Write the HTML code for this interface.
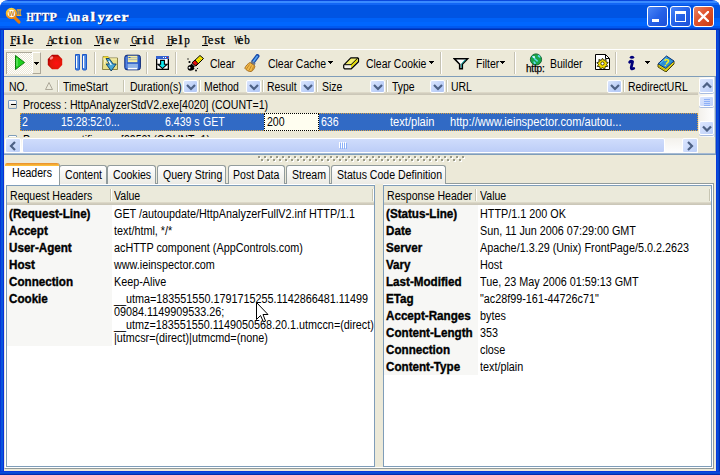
<!DOCTYPE html>
<html><head><meta charset="utf-8">
<style>
*{margin:0;padding:0;box-sizing:border-box}
html,body{width:720px;height:475px;overflow:hidden;background:#fff}
body{position:relative;font-family:"Liberation Sans",sans-serif;font-size:11px;color:#000;line-height:13px}
.a{position:absolute;white-space:nowrap}
#win{position:absolute;left:0;top:0;width:720px;height:475px;border-radius:8px 8px 0 0;overflow:hidden;
 background:linear-gradient(to right,#0019cf 0,#0855dd 1px,#0855dd 3px,#0831d9 3px,#0831d9 4px,transparent 4px,transparent 716px,#0831d9 716px,#0855dd 718px,#001ea0 720px)}
#title{left:0;top:0;width:720px;height:30px;
 background:linear-gradient(to bottom,#0a48dc 0,#0a48dc 1px,#3a8bff 1px,#3a8bff 3px,#1266f5 3px,#1266f5 5px,#0054e3 5px,#0054e3 18px,#0062f8 18px,#0062f8 22px,#0066ff 22px,#0066ff 26px,#0058ef 26px,#0058ef 28px,#0040d0 28px,#0040d0 29px,#0030b0 29px)}
#bottomframe{left:0;top:471px;width:720px;height:4px;background:linear-gradient(to bottom,#0831d9,#0855dd 2px,#001ea0)}
#client{left:4px;top:30px;width:712px;height:441px;background:#ece9d8}
.ttl{-webkit-text-stroke:.35px #fff;left:25px;top:8.5px;font-family:"Liberation Serif",serif;font-weight:bold;font-size:13.5px;line-height:16px;color:#fff;text-shadow:1px 1px 0 #0a1f7a}
.wb{width:21px;height:21px;top:6px;border:1px solid #fff;border-radius:3px}
.menu{white-space:pre;left:10px;top:34px;font-family:"Liberation Serif",serif;font-size:12px;line-height:13px;-webkit-text-stroke:.25px #000}
.menu u{text-decoration:none}
.tb{top:58px;font-size:12px;transform:scaleX(.87);transform-origin:0 0}
.sep{width:2px;height:22px;top:52px;border-left:1px solid #c5c2b2;border-right:1px solid #fff}
.arr{width:0;height:0;border-left:3px solid transparent;border-right:3px solid transparent;border-top:3px solid #000}
.hsep{top:80px;width:2px;height:12px;border-left:1px solid #c7c5b2;border-right:1px solid #fff}
.dd{top:80px;width:15px;height:13px;background:linear-gradient(135deg,#dbe6fd,#bdd0f8 60%,#b2c8f6);border-radius:2px;border:1px solid #fff}
.dd svg{position:absolute;left:2px;top:3px}
.ht{top:81px;font-size:12px;transform:scaleX(.87);transform-origin:0 0}
.row{font-size:12px;transform:scaleX(.88);transform-origin:0 0}
.wt{color:#fff}
.tab{top:165px;height:19px;border:1px solid #919b9c;border-bottom:none;border-radius:3px 3px 0 0;background:linear-gradient(#fff,#f3f3ef 60%,#ecebe5)}
.tabt{top:168px;font-size:12px;transform:scaleX(.88);transform-origin:0 0}
.sb{background:linear-gradient(to bottom,#fdfdfd,#f0f0ea)}
.btn{border:1px solid #fff;border-radius:2px;background:linear-gradient(135deg,#dce6fe,#bccff8)}
.ph{top:186px;height:19px;background:linear-gradient(to bottom,#ebeadb 0,#ebeadb 16px,#e2decd 16px,#d6d2c2 17px,#cbc7b8 18px)}
.pht{top:190px;font-size:12px;transform:scaleX(.88);transform-origin:0 0}
.b{-webkit-text-stroke:0.35px #000;font-weight:bold;font-size:12px;transform:scaleX(.97);transform-origin:0 0}
.v{font-size:12px;transform:scaleX(.9);transform-origin:0 0}
</style></head><body>
<div id="win">
 <div id="title" class="a"></div>
 <div id="client" class="a"></div>
 <div id="bottomframe" class="a"></div>
</div>
<!-- title bar -->
<svg class="a" style="left:5px;top:7px" width="18" height="18"><defs><linearGradient id="ig" x1="0" y1="0" x2=".3" y2="1"><stop offset="0" stop-color="#ffd838"/><stop offset="1" stop-color="#f08a10"/></linearGradient></defs><path d="M9.8 10.6L14 15" stroke="#e87a08" stroke-width="3.2" stroke-linecap="round"/><circle cx="6.4" cy="6.4" r="4.7" fill="#fffaf0" stroke="url(#ig)" stroke-width="1.9"/><text x="6.5" y="9" font-family="Liberation Sans" font-size="6.5" font-weight="bold" fill="#d08418" text-anchor="middle">W</text><path d="M11.8 2.8h4.6M11.8 8.3h4.6M13.1 2.8v5.5M15.1 2.8v5.5" stroke="#f8b020" stroke-width="1.2"/></svg>
<div class="a ttl"><span style="display:inline-block;width:8px;text-align:center"><span style="display:inline-block;transform:scaleX(0.70)">H</span></span><span style="display:inline-block;width:8px;text-align:center"><span style="display:inline-block;transform:scaleX(0.82)">T</span></span><span style="display:inline-block;width:8px;text-align:center"><span style="display:inline-block;transform:scaleX(0.82)">T</span></span><span style="display:inline-block;width:8px;text-align:center"><span style="display:inline-block;transform:scaleX(0.90)">P</span></span><span style="display:inline-block;width:8px"></span><span style="display:inline-block;width:8px;text-align:center"><span style="display:inline-block;transform:scaleX(0.76)">A</span></span><span style="display:inline-block;width:8px;text-align:center"><span style="display:inline-block;transform:scaleX(0.93)">n</span></span><span style="display:inline-block;width:8px;text-align:center"><span style="display:inline-block;transform:scaleX(1.04)">a</span></span><span style="display:inline-block;width:8px;text-align:center"><span style="display:inline-block;transform:scaleX(1.25)">l</span></span><span style="display:inline-block;width:8px;text-align:center"><span style="display:inline-block;transform:scaleX(1.04)">y</span></span><span style="display:inline-block;width:8px;text-align:center"><span style="display:inline-block;transform:scaleX(1.17)">z</span></span><span style="display:inline-block;width:8px;text-align:center"><span style="display:inline-block;transform:scaleX(1.17)">e</span></span><span style="display:inline-block;width:8px;text-align:center"><span style="display:inline-block;transform:scaleX(1.17)">r</span></span></div>
<div class="a wb" style="left:647px;background:linear-gradient(135deg,#4b86f7,#2662e8 50%,#1c4fd8)"><div class="a" style="left:4px;top:12px;width:7px;height:3px;background:#fff"></div></div>
<div class="a wb" style="left:670px;background:linear-gradient(135deg,#4b86f7,#2662e8 50%,#1c4fd8)"><div class="a" style="left:4px;top:4px;width:11px;height:11px;border:1px solid #fff;border-top-width:3px"></div></div>
<div class="a wb" style="left:693px;background:linear-gradient(135deg,#e98565,#e0532d 45%,#c83a12)">
 <svg class="a" style="left:4px;top:4px" width="11" height="11"><path d="M1 1L10 10M10 1L1 10" stroke="#fff" stroke-width="2.3" stroke-linecap="square"/></svg></div>

<!-- menu -->
<div class="a" style="left:4px;top:49px;width:712px;height:1px;background:#fff"></div>
<div class="a menu"><span style="display:inline-block;width:6px;text-align:center"><span style="display:inline-block;transform:scaleX(0.93)">F</span></span><span style="display:inline-block;width:6px;text-align:center"><span style="display:inline-block;transform:scaleX(1.40)">i</span></span><span style="display:inline-block;width:6px;text-align:center"><span style="display:inline-block;transform:scaleX(1.40)">l</span></span><span style="display:inline-block;width:6px;text-align:center"><span style="display:inline-block;transform:scaleX(1.05)">e</span></span><span style="display:inline-block;width:6px"></span><span style="display:inline-block;width:6px"></span><span style="display:inline-block;width:6px;text-align:center"><span style="display:inline-block;transform:scaleX(0.71)">A</span></span><span style="display:inline-block;width:6px;text-align:center"><span style="display:inline-block;transform:scaleX(1.05)">c</span></span><span style="display:inline-block;width:6px;text-align:center"><span style="display:inline-block;transform:scaleX(1.40)">t</span></span><span style="display:inline-block;width:6px;text-align:center"><span style="display:inline-block;transform:scaleX(1.40)">i</span></span><span style="display:inline-block;width:6px;text-align:center"><span style="display:inline-block;transform:scaleX(0.93)">o</span></span><span style="display:inline-block;width:6px;text-align:center"><span style="display:inline-block;transform:scaleX(0.93)">n</span></span><span style="display:inline-block;width:6px"></span><span style="display:inline-block;width:6px"></span><span style="display:inline-block;width:6px;text-align:center"><span style="display:inline-block;transform:scaleX(0.71)">V</span></span><span style="display:inline-block;width:6px;text-align:center"><span style="display:inline-block;transform:scaleX(1.40)">i</span></span><span style="display:inline-block;width:6px;text-align:center"><span style="display:inline-block;transform:scaleX(1.05)">e</span></span><span style="display:inline-block;width:6px;text-align:center"><span style="display:inline-block;transform:scaleX(0.65)">w</span></span><span style="display:inline-block;width:6px"></span><span style="display:inline-block;width:6px"></span><span style="display:inline-block;width:6px;text-align:center"><span style="display:inline-block;transform:scaleX(0.71)">G</span></span><span style="display:inline-block;width:6px;text-align:center"><span style="display:inline-block;transform:scaleX(1.40)">r</span></span><span style="display:inline-block;width:6px;text-align:center"><span style="display:inline-block;transform:scaleX(1.40)">i</span></span><span style="display:inline-block;width:6px;text-align:center"><span style="display:inline-block;transform:scaleX(0.93)">d</span></span><span style="display:inline-block;width:6px"></span><span style="display:inline-block;width:6px"></span><span style="display:inline-block;width:6px;text-align:center"><span style="display:inline-block;transform:scaleX(0.71)">H</span></span><span style="display:inline-block;width:6px;text-align:center"><span style="display:inline-block;transform:scaleX(1.05)">e</span></span><span style="display:inline-block;width:6px;text-align:center"><span style="display:inline-block;transform:scaleX(1.40)">l</span></span><span style="display:inline-block;width:6px;text-align:center"><span style="display:inline-block;transform:scaleX(0.93)">p</span></span><span style="display:inline-block;width:6px"></span><span style="display:inline-block;width:6px"></span><span style="display:inline-block;width:6px;text-align:center"><span style="display:inline-block;transform:scaleX(0.85)">T</span></span><span style="display:inline-block;width:6px;text-align:center"><span style="display:inline-block;transform:scaleX(1.05)">e</span></span><span style="display:inline-block;width:6px;text-align:center"><span style="display:inline-block;transform:scaleX(1.20)">s</span></span><span style="display:inline-block;width:6px;text-align:center"><span style="display:inline-block;transform:scaleX(1.40)">t</span></span><span style="display:inline-block;width:6px"></span><span style="display:inline-block;width:6px;text-align:center"><span style="display:inline-block;transform:scaleX(0.60)">W</span></span><span style="display:inline-block;width:6px;text-align:center"><span style="display:inline-block;transform:scaleX(1.05)">e</span></span><span style="display:inline-block;width:6px;text-align:center"><span style="display:inline-block;transform:scaleX(0.93)">b</span></span></div>

<div class="a" style="left:10px;top:45px;width:6px;height:1px;background:#000"></div><div class="a" style="left:46px;top:45px;width:6px;height:1px;background:#000"></div><div class="a" style="left:94px;top:45px;width:6px;height:1px;background:#000"></div><div class="a" style="left:130px;top:45px;width:6px;height:1px;background:#000"></div><div class="a" style="left:166px;top:45px;width:6px;height:1px;background:#000"></div><div class="a" style="left:202px;top:45px;width:6px;height:1px;background:#000"></div>
<!-- toolbar -->
<div class="a" style="left:4px;top:76px;width:712px;height:1px;background:#7f9db9"></div>
<div class="a" style="left:6px;top:52px;width:26px;height:22px;border-top:1px solid #aca899;border-left:1px solid #aca899;background-color:#fff;background-image:linear-gradient(45deg,#ece9d8 25%,transparent 25%,transparent 75%,#ece9d8 75%),linear-gradient(45deg,#ece9d8 25%,transparent 25%,transparent 75%,#ece9d8 75%);background-size:2px 2px;background-position:0 0,1px 1px"></div>
<div class="a" style="left:32px;top:52px;width:9px;height:22px;border-right:1px solid #aca899;border-bottom:1px solid #aca899;border-top:1px solid #fff;border-left:1px solid #fff"></div>
<svg class="a" style="left:34px;top:62px" width="5" height="3" shape-rendering="crispEdges"><path d="M0 0h5v1h-1v1h-1v1h-1v-1h-1v-1h-1z" fill="#000"/></svg>
<svg class="a" style="left:14px;top:54px" width="12" height="17"><path d="M1.5 1.5 L10.5 8.5 L1.5 15.5Z" fill="#1fd01f" stroke="#0a7a0a" stroke-width="1"/><path d="M3 4v8" stroke="#7ef07e" stroke-width="1"/></svg>

<svg class="a" style="left:47px;top:54px" width="16" height="16"><defs><radialGradient id="rg" cx=".6" cy=".6" r=".6"><stop offset="0" stop-color="#ff1010"/><stop offset=".7" stop-color="#e01808"/><stop offset="1" stop-color="#b00000"/></radialGradient></defs><path d="M5 .8h6l4.2 4.2v6L11 15.2H5L.8 11V5z" fill="url(#rg)"/><ellipse cx="4.5" cy="4" rx="2" ry="1.3" fill="#ff9090" transform="rotate(-40 4.5 4)"/></svg>
<svg class="a" style="left:74px;top:53px" width="15" height="18"><path d="M1.5 1.5h4v14.5c0 .6-.4 1-1 1h-2c-.6 0-1-.4-1-1z" fill="#4a86e0" stroke="#1c58c8"/><path d="M2.6 3v12" stroke="#fff" stroke-width="1.2"/><path d="M8.5 1.5h4v14.5c0 .6-.4 1-1 1h-2c-.6 0-1-.4-1-1z" fill="#4a86e0" stroke="#1c58c8"/><path d="M9.6 3v12" stroke="#fff" stroke-width="1.2"/></svg>
<div class="a sep" style="left:94px"></div>
<svg class="a" style="left:101px;top:54px" width="18" height="18"><path d="M2 2.5h5l1 1.5h8.5v11.5H1.5z" fill="#e8e088" stroke="#807838" stroke-width=".9"/><path d="M2.5 2.5h4.5l1 1.5H2.5z" fill="#f8e030"/><path d="M2 5h14" stroke="#f8f0b0" stroke-width="1.2"/><path d="M3 7h2M3 9h1" stroke="#fff" stroke-width="1"/><path d="M5 4.5h3.2l4 5.5h3l-5 7-5-7h3.2z" fill="#48a8d8" stroke="#0a3a60" stroke-width=".9" stroke-linejoin="round"/><path d="M7.8 7l2.5 4" stroke="#fff" stroke-width="1.3"/></svg>
<svg class="a" style="left:124px;top:54px" width="18" height="17"><rect x=".8" y="1.2" width="15.6" height="14.6" rx="2.2" fill="#2a5cc8" stroke="#0e2a78" stroke-width="1"/><rect x="3.8" y="1.8" width="9.6" height="6.4" fill="#f8f0a0"/><path d="M4.5 3.7h8.4M4.5 5.7h8.4" stroke="#98a8b8" stroke-width=".8"/><path d="M4.5 3.5h2" stroke="#3060c0" stroke-width="1"/><rect x="3.5" y="9.8" width="10.4" height="5.5" fill="#90b4e8"/><path d="M4 14.6h9" stroke="#fff" stroke-width="1.4"/><path d="M2.2 3v11" stroke="#6a98f0" stroke-width=".9"/></svg>
<div class="a sep" style="left:146px"></div>
<svg class="a" style="left:156px;top:56px" width="13" height="14"><rect x="0" y="0" width="13" height="14" fill="#000"/><rect x="1.3" y="3" width="10.4" height="9.7" fill="#fff"/><rect x="0" y="0" width="13" height="3" fill="#3462d0"/><rect x="7" y="1" width="1" height="1" fill="#fff"/><rect x="9" y="1" width="1" height="1" fill="#fff"/><rect x="11" y="1" width="1" height="1" fill="#f01010"/><path d="M4.6 4.4h3.8v3.8h2.8L6.5 12.6 1.8 8.2h2.8z" fill="#10e8f0" stroke="#000" stroke-width="1.1"/></svg>
<div class="a sep" style="left:175px"></div>
<svg class="a" style="left:186px;top:54px" width="19" height="18"><path d="M14 1.5L17.5 4.5 10 12 6.5 8.5z" fill="#f8e800" stroke="#000" stroke-width="1"/><path d="M15 3l1.5 1.5M13.5 4.5l1.5 1.5M12 6l1.5 1.5" stroke="#b0a000" stroke-width=".7"/><path d="M9 6L12 9.5 9.5 12 6 8.8z" fill="#e81010" stroke="#000" stroke-width="1"/><path d="M5.5 9.5L8.8 12.5 7 14.5 4 11.5z" fill="#000"/><path d="M6 11.5c-2-1-4.5 0-4.5 2.5 0 2 2 3 4 2.5 1.5-.3 2.5-1 3-2" fill="#000"/><circle cx="3.5" cy="8" r="1.1" fill="#000"/><circle cx="2" cy="5" r=".7" fill="#000"/><circle cx="10" cy="16.5" r=".9" fill="#000"/><circle cx="11.5" cy="14.5" r=".6" fill="#000"/><circle cx="3.5" cy="13.8" r="1" fill="#fff"/></svg>
<div class="a tb" style="left:210px">Clear</div>
<svg class="a" style="left:244px;top:54px" width="16" height="18"><path d="M13.5 2L9 8" stroke="#1848a8" stroke-width="4" stroke-linecap="round"/><path d="M13.3 2.3L9.5 7.5" stroke="#5aa8f0" stroke-width="1.6" stroke-linecap="round"/><path d="M7 7.5l4 3" stroke="#6a7890" stroke-width="2.2"/><path d="M6 8.5l5 3.5c-.5 2.5-2 5-4 5.5C5 18 2 16 .8 14.2 1.5 12 4 9.5 6 8.5z" fill="#f0b848" stroke="#a06818" stroke-width=".9"/><path d="M5.5 10.5L2.5 15M7.5 11.5L5 16.5M9.5 12.5L8 16.5" stroke="#b87a20" stroke-width=".8"/></svg>
<div class="a tb" style="left:268px">Clear Cache</div>
<svg class="a" style="left:328px;top:61px" width="5" height="3" shape-rendering="crispEdges"><path d="M0 0h5v1h-1v1h-1v1h-1v-1h-1v-1h-1z" fill="#000"/></svg>
<svg class="a" style="left:343px;top:57px" width="17" height="13"><path d="M8 1h6.5L8 7.5H1.5z" fill="#f4f070"/><path d="M1.5 7.5H8V11H1.5z" fill="#f4f2ea"/><path d="M8 7.5L14.5 1v3.5L8 11z" fill="#e8e000"/><path d="M7.8.8h7l.7.7v3.2L8.3 11.8H1.6l-.9-.9V8.2z" fill="none" stroke="#000" stroke-width="1.2" stroke-linejoin="round"/><path d="M1.5 7.7H8L14.8 1" fill="none" stroke="#000" stroke-width="1"/></svg>
<div class="a tb" style="left:366px">Clear Cookie</div>
<svg class="a" style="left:429px;top:61px" width="5" height="3" shape-rendering="crispEdges"><path d="M0 0h5v1h-1v1h-1v1h-1v-1h-1v-1h-1z" fill="#000"/></svg>
<div class="a sep" style="left:440px"></div>
<svg class="a" style="left:453px;top:57px" width="17" height="13"><path d="M1.5 1.8H14.5L9.3 7.2V11.8H6.7V7.2z" fill="#fff" stroke="#000" stroke-width="1.6" stroke-linejoin="miter"/><path d="M11.6 2.8h1.6L9 7v3.5l-.8.6V6.8z" fill="#18a0a0"/></svg>
<div class="a tb" style="left:476px">Filter</div>
<svg class="a" style="left:500px;top:61px" width="5" height="3" shape-rendering="crispEdges"><path d="M0 0h5v1h-1v1h-1v1h-1v-1h-1v-1h-1z" fill="#000"/></svg>
<div class="a sep" style="left:514px"></div>
<svg class="a" style="left:525px;top:53px" width="22" height="20"><circle cx="11" cy="6.5" r="5.6" fill="#18a848" stroke="#0a5a2a" stroke-width=".9"/><path d="M7 3.5c1.5 0 2.5 1 3 2.5.5 1 2 1 2.5 2.5M8.5 9c1 0 1.5 1 1.5 2M13 2.5c.8.5 1.5 1 2 2" stroke="#60d8f8" stroke-width="1.6" fill="none"/><circle cx="9" cy="4" r=".9" fill="#fff"/></svg><div class="a" style="left:526px;top:63px;font-size:10px;line-height:11px;-webkit-text-stroke:.25px #000;letter-spacing:-.2px">http:</div>
<div class="a tb" style="left:550px">Builder</div>
<svg class="a" style="left:594px;top:53px" width="17" height="18"><path d="M1.5 1.5h10l4 4v11h-14z" fill="#fff" stroke="#000"/><path d="M11.5 1.5v4h4" fill="none" stroke="#000"/><g transform="translate(8.5 10.5)"><path d="M0-5.2l1.3 2 2.3-.9-.2 2.4 2.3.8-1.7 1.7 1.2 2.1-2.4.1-.5 2.4L0 4.2l-2.3 1.3-.5-2.4-2.4-.1 1.2-2.1-1.7-1.7 2.3-.8-.2-2.4 2.3.9z" fill="#f8e000" stroke="#202000" stroke-width=".9"/><circle r="1.6" fill="#fff" stroke="#202000" stroke-width=".8"/></g></svg>
<div class="a sep" style="left:615px"></div>
<svg class="a" style="left:626px;top:54px" width="12" height="18"><ellipse cx="6" cy="3.3" rx="2.2" ry="1.5" fill="#00007a"/><path d="M3.6 8.2Q5 6.6 6.6 7.6L5.2 13.6Q5 15.8 7.8 14.4" fill="none" stroke="#00007a" stroke-width="2.7" stroke-linecap="round" stroke-linejoin="round"/></svg>
<svg class="a" style="left:645px;top:61px" width="5" height="3" shape-rendering="crispEdges"><path d="M0 0h5v1h-1v1h-1v1h-1v-1h-1v-1h-1z" fill="#000"/></svg>
<svg class="a" style="left:657px;top:55px" width="18" height="17"><path d="M1 9v3l8 5 8-8V6z" fill="#f8e818" stroke="#303000" stroke-width=".9"/><path d="M1 10.5l8 5 8-7.5" fill="none" stroke="#a09010" stroke-width=".7"/><path d="M1 8.8L9.5 1 17 6 8.8 13.5z" fill="#2a90d8" stroke="#0a3070" stroke-width="1"/><path d="M3 8.5L9.5 2.5" stroke="#7ad0ff" stroke-width=".8"/><path d="M8 5.5c1-1.5 4-1 3.5.8-.3 1-1.8 1.2-2 2.5M8.3 10.5h.1" fill="none" stroke="#f8f020" stroke-width="1.5" stroke-linecap="round"/></svg>
<!-- grid -->
<div class="a" style="left:715px;top:76px;width:1px;height:79px;background:#7f9db9"></div>
<div class="a" style="left:4px;top:154px;width:712px;height:1px;background:#7f9db9"></div>
<div class="a" style="left:4px;top:77px;width:694px;height:18px;background:linear-gradient(to bottom,#ebeadb 0,#ebeadb 15px,#e2decd 15px,#d6d2c2 16px,#cbc7b8 17px)"></div>
<div class="a ht" style="left:9px">NO.</div>
<svg class="a" style="left:45px;top:82px" width="8" height="8"><path d="M4 .5L7.5 7.5H.5z" fill="none" stroke="#aca899"/></svg>
<div class="a hsep" style="left:57px"></div><div class="a hsep" style="left:123px"></div><div class="a hsep" style="left:199px"></div><div class="a hsep" style="left:262px"></div><div class="a hsep" style="left:316px"></div><div class="a hsep" style="left:386px"></div><div class="a hsep" style="left:446px"></div><div class="a hsep" style="left:623px"></div><div class="a dd" style="left:183px"><svg width="10" height="7"><path d="M1 1l4 4 4-4" fill="none" stroke="#4d6185" stroke-width="2.2"/></svg></div><div class="a dd" style="left:246px"><svg width="10" height="7"><path d="M1 1l4 4 4-4" fill="none" stroke="#4d6185" stroke-width="2.2"/></svg></div><div class="a dd" style="left:300px"><svg width="10" height="7"><path d="M1 1l4 4 4-4" fill="none" stroke="#4d6185" stroke-width="2.2"/></svg></div><div class="a dd" style="left:370px"><svg width="10" height="7"><path d="M1 1l4 4 4-4" fill="none" stroke="#4d6185" stroke-width="2.2"/></svg></div><div class="a dd" style="left:430px"><svg width="10" height="7"><path d="M1 1l4 4 4-4" fill="none" stroke="#4d6185" stroke-width="2.2"/></svg></div><div class="a dd" style="left:607px"><svg width="10" height="7"><path d="M1 1l4 4 4-4" fill="none" stroke="#4d6185" stroke-width="2.2"/></svg></div>
<div class="a ht" style="left:63px">TimeStart</div><div class="a ht" style="left:130px">Duration(s)</div><div class="a ht" style="left:204px">Method</div><div class="a ht" style="left:267px">Result</div><div class="a ht" style="left:322px">Size</div><div class="a ht" style="left:392px">Type</div><div class="a ht" style="left:451px">URL</div><div class="a ht" style="left:628px">RedirectURL</div>

<div class="a" style="left:8px;top:100px;width:9px;height:9px;border:1px solid #7f9db9;border-radius:1px;background:linear-gradient(#fff,#e0ddd0)"><div class="a" style="left:2px;top:3px;width:5px;height:1px;background:#000"></div></div>
<div class="a row" style="left:23px;top:99px">Process : HttpAnalyzerStdV2.exe[4020] (COUNT=1)</div>

<div class="a" style="left:20px;top:113px;width:678px;height:18px;background:#316ac5;border:1px dotted #d8a040"></div>
<div class="a" style="left:264px;top:113px;width:55px;height:18px;background:#fffef0;border:1px dotted #000"></div>
<div class="a row wt" style="left:22px;top:116px">2</div>
<div class="a row wt" style="left:61px;top:116px">15:28:52:0...</div>
<div class="a row wt" style="left:165px;top:116px">6.439 s</div>
<div class="a row wt" style="left:203px;top:116px">GET</div>
<div class="a row" style="left:267px;top:116px">200</div>
<div class="a row wt" style="left:321px;top:116px">636</div>
<div class="a row wt" style="left:390px;top:116px;transform:scaleX(.925)">text/plain</div>
<div class="a row wt" style="left:450px;top:116px;transform:scaleX(.925)">http://www.ieinspector.com/autou...</div>

<div class="a" style="left:4px;top:131px;width:694px;height:6px;overflow:hidden">
 <div class="a" style="left:4px;top:4px;width:9px;height:9px;border:1px solid #7f9db9;border-radius:1px;background:#fff"></div>
 <div class="a row" style="left:19px;top:3px">Process : notifier.exe[3952] (COUNT=1)</div>
</div>

<!-- h scrollbar -->
<div class="a" style="left:5px;top:138px;width:693px;height:15px;background:linear-gradient(to bottom,#f3f1ec,#fefefe)"></div>
<div class="a btn" style="left:5px;top:138px;width:16px;height:15px"><svg class="a" style="left:2.5px;top:1.5px" width="8" height="10"><path d="M6 1L2 5l4 4" fill="none" stroke="#4d6185" stroke-width="2.2"/></svg></div>
<div class="a" style="left:22px;top:138px;width:643px;height:15px;border:1px solid #fff;border-radius:2px;background:linear-gradient(to bottom,#cfdcfc,#bccdf7)"></div><svg class="a" style="left:339px;top:142px" width="8" height="7" shape-rendering="crispEdges"><path d="M1.5 1v6M3.5 1v6M5.5 1v6M7.5 1v6" stroke="#8cb0f8"/><path d="M.5 0v6M2.5 0v6M4.5 0v6M6.5 0v6" stroke="#fff"/></svg>
<div class="a btn" style="left:682px;top:138px;width:16px;height:15px"><svg class="a" style="left:2.5px;top:1.5px" width="8" height="10"><path d="M2 1l4 4-4 4" fill="none" stroke="#4d6185" stroke-width="2.2"/></svg></div>
<div class="a" style="left:4px;top:153px;width:711px;height:1px;background:#a6bad4"></div>
<!-- v scrollbar -->
<div class="a" style="left:699px;top:77px;width:15px;height:60px;background:linear-gradient(to right,#f3f1ec,#fefefe)"></div>
<div class="a" style="left:714px;top:77px;width:1px;height:60px;background:#c8d4e4"></div>
<div class="a btn" style="left:699px;top:78px;width:15px;height:15px;box-shadow:0 1px 0 #a8bce0"><svg class="a" style="left:2px;top:3px" width="10" height="7"><path d="M1 5.5l4-4 4 4" fill="none" stroke="#4d6185" stroke-width="2.3"/></svg></div>
<div class="a btn" style="left:699px;top:96px;width:15px;height:11px;box-shadow:0 1px 0 #a8bce0"><svg class="a" style="left:4px;top:2px" width="6" height="7" shape-rendering="crispEdges"><path d="M0 .5h6M0 2.5h6M0 4.5h6M0 6.5h6" stroke="#8cb0f8"/></svg></div>
<div class="a btn" style="left:699px;top:121px;width:15px;height:14px;box-shadow:0 1px 0 #a8bce0"><svg class="a" style="left:2px;top:3px" width="10" height="7"><path d="M1 1.5l4 4 4-4" fill="none" stroke="#4d6185" stroke-width="2.3"/></svg></div>

<!-- splitter -->
<div class="a" style="left:259px;top:157px;width:2px;height:2px;background:#fff"></div><div class="a" style="left:258px;top:156px;width:2px;height:2px;background:#999988"></div><div class="a" style="left:265px;top:157px;width:2px;height:2px;background:#fff"></div><div class="a" style="left:264px;top:156px;width:2px;height:2px;background:#999988"></div><div class="a" style="left:271px;top:157px;width:2px;height:2px;background:#fff"></div><div class="a" style="left:270px;top:156px;width:2px;height:2px;background:#999988"></div><div class="a" style="left:277px;top:157px;width:2px;height:2px;background:#fff"></div><div class="a" style="left:276px;top:156px;width:2px;height:2px;background:#999988"></div><div class="a" style="left:283px;top:157px;width:2px;height:2px;background:#fff"></div><div class="a" style="left:282px;top:156px;width:2px;height:2px;background:#999988"></div><div class="a" style="left:289px;top:157px;width:2px;height:2px;background:#fff"></div><div class="a" style="left:288px;top:156px;width:2px;height:2px;background:#999988"></div><div class="a" style="left:295px;top:157px;width:2px;height:2px;background:#fff"></div><div class="a" style="left:294px;top:156px;width:2px;height:2px;background:#999988"></div><div class="a" style="left:301px;top:157px;width:2px;height:2px;background:#fff"></div><div class="a" style="left:300px;top:156px;width:2px;height:2px;background:#999988"></div><div class="a" style="left:307px;top:157px;width:2px;height:2px;background:#fff"></div><div class="a" style="left:306px;top:156px;width:2px;height:2px;background:#999988"></div><div class="a" style="left:313px;top:157px;width:2px;height:2px;background:#fff"></div><div class="a" style="left:312px;top:156px;width:2px;height:2px;background:#999988"></div><div class="a" style="left:319px;top:157px;width:2px;height:2px;background:#fff"></div><div class="a" style="left:318px;top:156px;width:2px;height:2px;background:#999988"></div><div class="a" style="left:325px;top:157px;width:2px;height:2px;background:#fff"></div><div class="a" style="left:324px;top:156px;width:2px;height:2px;background:#999988"></div><div class="a" style="left:331px;top:157px;width:2px;height:2px;background:#fff"></div><div class="a" style="left:330px;top:156px;width:2px;height:2px;background:#999988"></div><div class="a" style="left:337px;top:157px;width:2px;height:2px;background:#fff"></div><div class="a" style="left:336px;top:156px;width:2px;height:2px;background:#999988"></div><div class="a" style="left:343px;top:157px;width:2px;height:2px;background:#fff"></div><div class="a" style="left:342px;top:156px;width:2px;height:2px;background:#999988"></div><div class="a" style="left:349px;top:157px;width:2px;height:2px;background:#fff"></div><div class="a" style="left:348px;top:156px;width:2px;height:2px;background:#999988"></div><div class="a" style="left:355px;top:157px;width:2px;height:2px;background:#fff"></div><div class="a" style="left:354px;top:156px;width:2px;height:2px;background:#999988"></div><div class="a" style="left:361px;top:157px;width:2px;height:2px;background:#fff"></div><div class="a" style="left:360px;top:156px;width:2px;height:2px;background:#999988"></div><div class="a" style="left:367px;top:157px;width:2px;height:2px;background:#fff"></div><div class="a" style="left:366px;top:156px;width:2px;height:2px;background:#999988"></div><div class="a" style="left:373px;top:157px;width:2px;height:2px;background:#fff"></div><div class="a" style="left:372px;top:156px;width:2px;height:2px;background:#999988"></div><div class="a" style="left:379px;top:157px;width:2px;height:2px;background:#fff"></div><div class="a" style="left:378px;top:156px;width:2px;height:2px;background:#999988"></div><div class="a" style="left:385px;top:157px;width:2px;height:2px;background:#fff"></div><div class="a" style="left:384px;top:156px;width:2px;height:2px;background:#999988"></div><div class="a" style="left:391px;top:157px;width:2px;height:2px;background:#fff"></div><div class="a" style="left:390px;top:156px;width:2px;height:2px;background:#999988"></div><div class="a" style="left:397px;top:157px;width:2px;height:2px;background:#fff"></div><div class="a" style="left:396px;top:156px;width:2px;height:2px;background:#999988"></div><div class="a" style="left:403px;top:157px;width:2px;height:2px;background:#fff"></div><div class="a" style="left:402px;top:156px;width:2px;height:2px;background:#999988"></div><div class="a" style="left:409px;top:157px;width:2px;height:2px;background:#fff"></div><div class="a" style="left:408px;top:156px;width:2px;height:2px;background:#999988"></div><div class="a" style="left:415px;top:157px;width:2px;height:2px;background:#fff"></div><div class="a" style="left:414px;top:156px;width:2px;height:2px;background:#999988"></div><div class="a" style="left:421px;top:157px;width:2px;height:2px;background:#fff"></div><div class="a" style="left:420px;top:156px;width:2px;height:2px;background:#999988"></div><div class="a" style="left:427px;top:157px;width:2px;height:2px;background:#fff"></div><div class="a" style="left:426px;top:156px;width:2px;height:2px;background:#999988"></div><div class="a" style="left:433px;top:157px;width:2px;height:2px;background:#fff"></div><div class="a" style="left:432px;top:156px;width:2px;height:2px;background:#999988"></div><div class="a" style="left:439px;top:157px;width:2px;height:2px;background:#fff"></div><div class="a" style="left:438px;top:156px;width:2px;height:2px;background:#999988"></div><div class="a" style="left:445px;top:157px;width:2px;height:2px;background:#fff"></div><div class="a" style="left:444px;top:156px;width:2px;height:2px;background:#999988"></div><div class="a" style="left:451px;top:157px;width:2px;height:2px;background:#fff"></div><div class="a" style="left:450px;top:156px;width:2px;height:2px;background:#999988"></div><div class="a" style="left:457px;top:157px;width:2px;height:2px;background:#fff"></div><div class="a" style="left:456px;top:156px;width:2px;height:2px;background:#999988"></div><div class="a" style="left:463px;top:157px;width:2px;height:2px;background:#fff"></div><div class="a" style="left:462px;top:156px;width:2px;height:2px;background:#999988"></div><div class="a" style="left:262px;top:160px;width:2px;height:2px;background:#fff"></div><div class="a" style="left:261px;top:159px;width:2px;height:2px;background:#999988"></div><div class="a" style="left:268px;top:160px;width:2px;height:2px;background:#fff"></div><div class="a" style="left:267px;top:159px;width:2px;height:2px;background:#999988"></div><div class="a" style="left:274px;top:160px;width:2px;height:2px;background:#fff"></div><div class="a" style="left:273px;top:159px;width:2px;height:2px;background:#999988"></div><div class="a" style="left:280px;top:160px;width:2px;height:2px;background:#fff"></div><div class="a" style="left:279px;top:159px;width:2px;height:2px;background:#999988"></div><div class="a" style="left:286px;top:160px;width:2px;height:2px;background:#fff"></div><div class="a" style="left:285px;top:159px;width:2px;height:2px;background:#999988"></div><div class="a" style="left:292px;top:160px;width:2px;height:2px;background:#fff"></div><div class="a" style="left:291px;top:159px;width:2px;height:2px;background:#999988"></div><div class="a" style="left:298px;top:160px;width:2px;height:2px;background:#fff"></div><div class="a" style="left:297px;top:159px;width:2px;height:2px;background:#999988"></div><div class="a" style="left:304px;top:160px;width:2px;height:2px;background:#fff"></div><div class="a" style="left:303px;top:159px;width:2px;height:2px;background:#999988"></div><div class="a" style="left:310px;top:160px;width:2px;height:2px;background:#fff"></div><div class="a" style="left:309px;top:159px;width:2px;height:2px;background:#999988"></div><div class="a" style="left:316px;top:160px;width:2px;height:2px;background:#fff"></div><div class="a" style="left:315px;top:159px;width:2px;height:2px;background:#999988"></div><div class="a" style="left:322px;top:160px;width:2px;height:2px;background:#fff"></div><div class="a" style="left:321px;top:159px;width:2px;height:2px;background:#999988"></div><div class="a" style="left:328px;top:160px;width:2px;height:2px;background:#fff"></div><div class="a" style="left:327px;top:159px;width:2px;height:2px;background:#999988"></div><div class="a" style="left:334px;top:160px;width:2px;height:2px;background:#fff"></div><div class="a" style="left:333px;top:159px;width:2px;height:2px;background:#999988"></div><div class="a" style="left:340px;top:160px;width:2px;height:2px;background:#fff"></div><div class="a" style="left:339px;top:159px;width:2px;height:2px;background:#999988"></div><div class="a" style="left:346px;top:160px;width:2px;height:2px;background:#fff"></div><div class="a" style="left:345px;top:159px;width:2px;height:2px;background:#999988"></div><div class="a" style="left:352px;top:160px;width:2px;height:2px;background:#fff"></div><div class="a" style="left:351px;top:159px;width:2px;height:2px;background:#999988"></div><div class="a" style="left:358px;top:160px;width:2px;height:2px;background:#fff"></div><div class="a" style="left:357px;top:159px;width:2px;height:2px;background:#999988"></div><div class="a" style="left:364px;top:160px;width:2px;height:2px;background:#fff"></div><div class="a" style="left:363px;top:159px;width:2px;height:2px;background:#999988"></div><div class="a" style="left:370px;top:160px;width:2px;height:2px;background:#fff"></div><div class="a" style="left:369px;top:159px;width:2px;height:2px;background:#999988"></div><div class="a" style="left:376px;top:160px;width:2px;height:2px;background:#fff"></div><div class="a" style="left:375px;top:159px;width:2px;height:2px;background:#999988"></div><div class="a" style="left:382px;top:160px;width:2px;height:2px;background:#fff"></div><div class="a" style="left:381px;top:159px;width:2px;height:2px;background:#999988"></div><div class="a" style="left:388px;top:160px;width:2px;height:2px;background:#fff"></div><div class="a" style="left:387px;top:159px;width:2px;height:2px;background:#999988"></div><div class="a" style="left:394px;top:160px;width:2px;height:2px;background:#fff"></div><div class="a" style="left:393px;top:159px;width:2px;height:2px;background:#999988"></div><div class="a" style="left:400px;top:160px;width:2px;height:2px;background:#fff"></div><div class="a" style="left:399px;top:159px;width:2px;height:2px;background:#999988"></div><div class="a" style="left:406px;top:160px;width:2px;height:2px;background:#fff"></div><div class="a" style="left:405px;top:159px;width:2px;height:2px;background:#999988"></div><div class="a" style="left:412px;top:160px;width:2px;height:2px;background:#fff"></div><div class="a" style="left:411px;top:159px;width:2px;height:2px;background:#999988"></div><div class="a" style="left:418px;top:160px;width:2px;height:2px;background:#fff"></div><div class="a" style="left:417px;top:159px;width:2px;height:2px;background:#999988"></div><div class="a" style="left:424px;top:160px;width:2px;height:2px;background:#fff"></div><div class="a" style="left:423px;top:159px;width:2px;height:2px;background:#999988"></div><div class="a" style="left:430px;top:160px;width:2px;height:2px;background:#fff"></div><div class="a" style="left:429px;top:159px;width:2px;height:2px;background:#999988"></div><div class="a" style="left:436px;top:160px;width:2px;height:2px;background:#fff"></div><div class="a" style="left:435px;top:159px;width:2px;height:2px;background:#999988"></div><div class="a" style="left:442px;top:160px;width:2px;height:2px;background:#fff"></div><div class="a" style="left:441px;top:159px;width:2px;height:2px;background:#999988"></div><div class="a" style="left:448px;top:160px;width:2px;height:2px;background:#fff"></div><div class="a" style="left:447px;top:159px;width:2px;height:2px;background:#999988"></div><div class="a" style="left:454px;top:160px;width:2px;height:2px;background:#fff"></div><div class="a" style="left:453px;top:159px;width:2px;height:2px;background:#999988"></div><div class="a" style="left:460px;top:160px;width:2px;height:2px;background:#fff"></div><div class="a" style="left:459px;top:159px;width:2px;height:2px;background:#999988"></div>
<!-- tabs -->
<div class="a" style="left:4px;top:183px;width:710px;height:286px;background:#fff;border:1px solid #919b9c;border-left-color:#e6e6e0"></div>
<div class="a tab" style="left:59px;width:48px"></div><div class="a tabt" style="left:65px;top:169px">Content</div>
<div class="a tab" style="left:107px;width:49px"></div><div class="a tabt" style="left:113px;top:169px">Cookies</div>
<div class="a tab" style="left:157px;width:69px"></div><div class="a tabt" style="left:163px;top:169px">Query String</div>
<div class="a tab" style="left:228px;width:57px"></div><div class="a tabt" style="left:233px;top:169px">Post Data</div>
<div class="a tab" style="left:286px;width:44px"></div><div class="a tabt" style="left:292px;top:169px">Stream</div>
<div class="a tab" style="left:331px;width:115px"></div><div class="a tabt" style="left:337px;top:169px">Status Code Definition</div>
<div class="a" style="left:4px;top:163px;width:56px;height:22px;background:#fff;border:1px solid #919b9c;border-top:none;border-bottom:none;border-left-color:#e6e6e0;border-radius:3px 3px 0 0"></div>
<div class="a" style="left:5px;top:163px;width:54px;height:3px;background:linear-gradient(#e68b2c,#ffc73c);border-radius:2px 2px 0 0"></div>
<div class="a tabt" style="left:12px;top:167px">Headers</div>

<!-- left panel -->
<div class="a" style="left:375px;top:184px;width:8px;height:283px;background:#ece9d8"></div>
<div class="a" style="left:6px;top:185px;width:369px;height:282px;border:1px solid #7f9db9;background:#fff"></div>
<div class="a ph" style="left:7px;width:367px"></div>
<div class="a pht" style="left:10px">Request Headers</div>
<div class="a hsep" style="left:110px;top:189px"></div>
<div class="a pht" style="left:114px">Value</div>
<div class="a hsep" style="left:372px;top:189px"></div>
<div class="a" style="left:7px;top:205px;width:105px;height:141px;background:#f7f7f5"></div>
<div class="a b" style="left:9px;top:208px">(Request-Line)</div>
<div class="a b" style="left:9px;top:225px">Accept</div>
<div class="a b" style="left:9px;top:242px">User-Agent</div>
<div class="a b" style="left:9px;top:259px">Host</div>
<div class="a b" style="left:9px;top:276px">Connection</div>
<div class="a b" style="left:9px;top:293px">Cookie</div>
<div class="a v" style="left:114px;top:208px">GET /autoupdate/HttpAnalyzerFullV2.inf HTTP/1.1</div>
<div class="a v" style="left:114px;top:225px">text/html, */*</div>
<div class="a v" style="left:114px;top:242px">acHTTP component (AppControls.com)</div>
<div class="a v" style="left:114px;top:259px">www.ieinspector.com</div>
<div class="a v" style="left:114px;top:276px">Keep-Alive</div>
<div class="a v" style="left:114px;top:293px">__utma=183551550.1791715255.1142866481.11499</div>
<div class="a v" style="left:114px;top:306px">09084.1149909533.26;</div>
<div class="a v" style="left:114px;top:319px">__utmz=183551550.1149050568.20.1.utmccn=(direct)</div>
<div class="a v" style="left:114px;top:332px">|utmcsr=(direct)|utmcmd=(none)</div>

<!-- right panel -->
<div class="a" style="left:383px;top:185px;width:329px;height:282px;border:1px solid #7f9db9;background:#fff"></div>
<div class="a ph" style="left:384px;width:327px"></div>
<div class="a pht" style="left:387px">Response Header</div>
<div class="a hsep" style="left:475px;top:189px"></div>
<div class="a pht" style="left:480px">Value</div>
<div class="a hsep" style="left:709px;top:189px"></div>
<div class="a" style="left:384px;top:205px;width:94px;height:170px;background:#f7f7f5"></div>
<div class="a b" style="left:386px;top:208px">(Status-Line)</div>
<div class="a b" style="left:386px;top:225px">Date</div>
<div class="a b" style="left:386px;top:242px">Server</div>
<div class="a b" style="left:386px;top:259px">Vary</div>
<div class="a b" style="left:386px;top:276px">Last-Modified</div>
<div class="a b" style="left:386px;top:293px">ETag</div>
<div class="a b" style="left:386px;top:310px">Accept-Ranges</div>
<div class="a b" style="left:386px;top:327px">Content-Length</div>
<div class="a b" style="left:386px;top:344px">Connection</div>
<div class="a b" style="left:386px;top:361px">Content-Type</div>
<div class="a v" style="left:480px;top:208px">HTTP/1.1 200 OK</div>
<div class="a v" style="left:480px;top:225px">Sun, 11 Jun 2006 07:29:00 GMT</div>
<div class="a v" style="left:480px;top:242px">Apache/1.3.29 (Unix) FrontPage/5.0.2.2623</div>
<div class="a v" style="left:480px;top:259px">Host</div>
<div class="a v" style="left:480px;top:276px">Tue, 23 May 2006 01:59:13 GMT</div>
<div class="a v" style="left:480px;top:293px">"ac28f99-161-44726c71"</div>
<div class="a v" style="left:480px;top:310px">bytes</div>
<div class="a v" style="left:480px;top:327px">353</div>
<div class="a v" style="left:480px;top:344px">close</div>
<div class="a v" style="left:480px;top:361px">text/plain</div>

<!-- cursor -->
<svg class="a" style="left:256px;top:302px" width="14" height="22"><path d="M.5 .5V17.5L4.5 13.5 7.5 20 9.5 19 7 12.5H12z" fill="#fff" stroke="#000" stroke-linejoin="miter"/></svg>
</body></html>
